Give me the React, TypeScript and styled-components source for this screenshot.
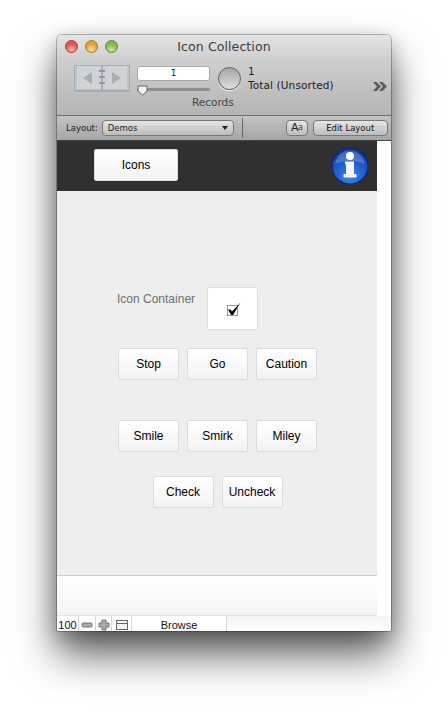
import React from "react";
import styled, { createGlobalStyle } from "styled-components";

const Global = createGlobalStyle`
html, body {
  margin: 0;
  background: #fff;
  height: 710px;
  overflow: hidden;
}
body {
  font-family: "Liberation Sans", Arial, sans-serif;
}
`;

const Page = styled.div`
  padding: 35px 0 0 57px;
`;

const Window = styled.div`
  width: 334px;
  height: 596px;
  box-sizing: border-box;
  border-radius: 5px 5px 2px 2px;
  overflow: hidden;
  display: flex;
  flex-direction: column;
  background: #fff;
  box-shadow: 0 0 0 1px rgba(0, 0, 0, 0.25), 0 24px 42px rgba(0, 0, 0, 0.62), 0 6px 20px rgba(0, 0, 0, 0.25);
`;

const TitleBar = styled.div`
  height: 81px;
  flex: none;
  position: relative;
  background: linear-gradient(#e4e4e4, #cfcfcf 30%, #b4b4b4);
  border-bottom: 1px solid #6e6e6e;
  box-sizing: border-box;
  font-family: "DejaVu Sans", sans-serif;
`;

const Lights = styled.div`
  position: absolute;
  left: 8px;
  top: 5px;
  display: flex;
  gap: 7px;
`;

const Light = styled.span<{ $c: string; $d: string }>`
  width: 11px;
  height: 11px;
  border-radius: 50%;
  border: 1px solid ${(p) => p.$d};
  background: radial-gradient(circle at 50% 80%, #fff9 0, transparent 60%), ${(p) => p.$c};
`;

const Title = styled.div`
  text-align: center;
  padding-top: 4px;
  font-size: 12.5px;
  line-height: 16px;
  color: #3c3c3c;
  letter-spacing: 0.1px;
`;

const Controls = styled.div`
  display: flex;
  padding: 9px 0 0 17px;
`;

const Book = styled.svg`
  width: 56px;
  height: 27px;
  flex: none;
  margin-top: 1px;
`;

const Pager = styled.div`
  margin: 2px 0 0 7px;
  width: 73px;
  display: flex;
  flex-direction: column;
`;

const PageInput = styled.div`
  height: 13px;
  background: #fff;
  border: 1px solid #a8a8a8;
  border-radius: 3px;
  font-size: 9px;
  line-height: 13px;
  text-align: center;
  color: #222;
`;

const Slider = styled.div`
  margin-top: 7px;
  height: 3px;
  background: #8f8f8f;
  border-radius: 2px;
  position: relative;
`;

const Thumb = styled.svg`
  position: absolute;
  left: 0;
  top: -3px;
  width: 11px;
  height: 11px;
`;

const RecordsLabel = styled.div`
  margin-top: 5px;
  padding-left: 55px;
  white-space: nowrap;
  font-size: 10.5px;
  line-height: 13px;
  color: #444;
`;

const Pie = styled.div`
  width: 21px;
  height: 21px;
  margin: 3px 0 0 8px;
  flex: none;
  border-radius: 50%;
  border: 1px solid #5c5c5c;
  background: linear-gradient(#a8a8a8, #c4c4c4 55%, #e0e0e0);
  box-shadow: 0 1px 1px #eee;
`;

const Counts = styled.div`
  margin-left: 7px;
  font-size: 10.5px;
  line-height: 14px;
  letter-spacing: 0.12px;
  color: #1c1c1c;
  white-space: nowrap;
`;

const More = styled.svg`
  position: absolute;
  right: 3px;
  top: 46px;
  width: 15px;
  height: 11px;
`;

const LayoutBar = styled.div`
  height: 25px;
  flex: none;
  display: flex;
  align-items: center;
  box-sizing: border-box;
  background: linear-gradient(#c3c3c3, #a6a6a6);
  border-bottom: 1px solid #444;
  font-family: "DejaVu Sans", sans-serif;
  font-size: 8.5px;
  color: #222;
  padding: 0 3px 0 9px;
`;

const ChromeButton = styled.div<{ $w: number }>`
  width: ${(p) => p.$w}px;
  height: 16px;
  box-sizing: border-box;
  flex: none;
  border: 1px solid #777;
  border-radius: 4px;
  background: linear-gradient(#e6e6e6, #bcbcbc);
  line-height: 15px;
  text-align: center;
`;

const LayoutSelect = styled(ChromeButton)`
  margin-left: 4px;
  text-align: left;
  padding-left: 5px;
  position: relative;
`;

const Caret = styled.span`
  position: absolute;
  right: 5px;
  top: 5px;
  border-left: 3px solid transparent;
  border-right: 3px solid transparent;
  border-top: 4px solid #222;
`;

const Divider = styled.div`
  width: 1px;
  height: 20px;
  background: #666;
  margin: 0 43px 0 8px;
  flex: none;
`;

const FontButton = styled(ChromeButton)`
  font-size: 11px;
  line-height: 14px;
  letter-spacing: -0.5px;
`;

const SmallA = styled.span`
  font-size: 8px;
  color: #444;
  vertical-align: 1px;
`;

const EditLayout = styled(ChromeButton)`
  margin-left: 5px;
  color: #111;
`;

const Content = styled.div`
  flex: 1;
  display: flex;
  min-height: 0;
`;

const Stage = styled.div`
  width: 320px;
  display: flex;
  flex-direction: column;
`;

const Header = styled.div`
  height: 50px;
  flex: none;
  box-sizing: border-box;
  background: #303030;
  display: flex;
  align-items: center;
  justify-content: space-between;
  padding: 0 8px 2px 37px;
`;

const Info = styled.svg`
  width: 38px;
  height: 38px;
  flex: none;
  margin-top: 2px;
`;

const Button = styled.div<{ $w?: number }>`
  width: ${(p) => p.$w ?? 61}px;
  height: 32px;
  box-sizing: border-box;
  border: 1px solid #dcdcdc;
  border-radius: 2px;
  background: linear-gradient(#fff, #f3f3f3);
  color: #000;
  font-size: 12px;
  line-height: 30px;
  text-align: center;
`;

const FormArea = styled.div`
  flex: 1;
  background: #eeeeee;
  padding-top: 96px;
`;

const ContainerRow = styled.div`
  display: flex;
  padding-left: 60px;
  height: 43px;
`;

const ContainerLabel = styled.div`
  width: 90px;
  font-size: 12px;
  line-height: 14px;
  padding-top: 5px;
  color: #6d6f70;
`;

const IconContainer = styled.div`
  width: 51px;
  height: 43px;
  box-sizing: border-box;
  background: #fff;
  border: 1px solid #dedede;
  border-radius: 2px;
  display: flex;
  align-items: center;
  justify-content: center;
`;

const Checkbox = styled.svg`
  width: 18px;
  height: 18px;
`;

const ButtonRow = styled.div<{ $top: number }>`
  display: flex;
  justify-content: center;
  gap: 8px;
  padding-left: 1px;
  margin-top: ${(p) => p.$top}px;
`;

const Footer = styled.div`
  height: 41px;
  flex: none;
  box-sizing: border-box;
  background: linear-gradient(#fff, #f4f4f4);
  border-top: 1px solid #cfcfcf;
  border-bottom: 1px solid #e2e2e2;
`;

const RightStrip = styled.div`
  width: 14px;
  flex: none;
  background: #fff;
  box-sizing: border-box;
`;

const StatusBar = styled.div`
  height: 15px;
  flex: none;
  display: flex;
  background: linear-gradient(#f4f4f4, #fff);
  font-size: 11px;
  color: #111;
`;

const StatusCell = styled.div<{ $w: number }>`
  width: ${(p) => p.$w}px;
  flex: none;
  box-sizing: border-box;
  border-right: 1px solid #d6d6d6;
  background: #fff;
  padding-top: 2px;
  display: flex;
  align-items: center;
  justify-content: center;
`;

const StatusIcon = styled.svg`
  width: 14px;
  height: 12px;
`;

export default function App() {
  return (
    <>
      <Global />
      <Page>
        <Window>
          <TitleBar>
            <Lights>
              <Light $c="#e2524c" $d="#a8403c" />
              <Light $c="#e0a030" $d="#a67a2c" />
              <Light $c="#7cb84c" $d="#5f8f3c" />
            </Lights>
            <Title>Icon Collection</Title>
            <Controls>
              <Book viewBox="0 0 56 27">
                <rect x="0.5" y="0.5" width="55" height="25" fill="#bcc5cc" stroke="#a3adb6" />
                <rect x="3" y="1" width="50" height="23" fill="#ced3d7" />
                <path d="M0 26h56" stroke="#98a1a9" />
                <path d="M9 13l9-6v12zM47 13l-9-6v12z" fill="#a5afb8" />
                <path d="M28 1v24" stroke="#98a3ac" strokeWidth="1.5" />
                <path d="M25 6h6M25 12h6M25 18h6" stroke="#8d98a2" strokeWidth="2" />
              </Book>
              <Pager>
                <PageInput>1</PageInput>
                <Slider>
                  <Thumb viewBox="0 0 11 11">
                    <path d="M1 1h9v5l-4.5 4L1 6z" fill="#f4f4f4" stroke="#666" />
                  </Thumb>
                </Slider>
                <RecordsLabel>Records</RecordsLabel>
              </Pager>
              <Pie />
              <Counts>
                1
                <br />
                Total (Unsorted)
              </Counts>
            </Controls>
            <More viewBox="0 0 15 11">
              <path d="M0 1h3.5L8 5.5 3.5 10H0l4-4.5zM6 1h3.5L14 5.5 9.5 10H6l4-4.5z" fill="#5a5a5a" />
            </More>
          </TitleBar>
          <LayoutBar>
            Layout:
            <LayoutSelect $w={132}>
              Demos
              <Caret />
            </LayoutSelect>
            <Divider />
            <FontButton $w={22}>
              A<SmallA>a</SmallA>
            </FontButton>
            <EditLayout $w={75}>Edit Layout</EditLayout>
          </LayoutBar>
          <Content>
            <Stage>
              <Header>
                <Button $w={84}>Icons</Button>
                <Info viewBox="0 0 38 38">
                  <defs>
                    <radialGradient id="infoFill" cx="50%" cy="80%" r="75%">
                      <stop offset="0" stopColor="#3f86e8" />
                      <stop offset="0.65" stopColor="#1a57c8" />
                      <stop offset="1" stopColor="#0c3596" />
                    </radialGradient>
                  </defs>
                  <circle cx="19" cy="19" r="18" fill="url(#infoFill)" stroke="#0a2a78" strokeWidth="1.2" />
                  <path d="M4 17C6 8 12 3.5 19 3.5S32 8 34 17c-8-4-22-4-30 0z" fill="#fff" opacity="0.22" />
                  <circle cx="19" cy="9" r="4" fill="#fff" />
                  <path d="M14 14.5h9V27h2.5v3.5h-13V27H15V17.5h-1z" fill="#f4f6fa" />
                </Info>
              </Header>
              <FormArea>
                <ContainerRow>
                  <ContainerLabel>Icon Container</ContainerLabel>
                  <IconContainer>
                    <Checkbox viewBox="0 0 18 18">
                      <rect x="3.5" y="5.5" width="10" height="10" fill="#fff" stroke="#6f9fe8" />
                      <path d="M4 9.5h2.5L8 11.5l8.5-9L9 15H7z" fill="#000" />
                    </Checkbox>
                  </IconContainer>
                </ContainerRow>
                <ButtonRow $top={18}>
                  <Button>Stop</Button>
                  <Button>Go</Button>
                  <Button>Caution</Button>
                </ButtonRow>
                <ButtonRow $top={40}>
                  <Button>Smile</Button>
                  <Button>Smirk</Button>
                  <Button>Miley</Button>
                </ButtonRow>
                <ButtonRow $top={24}>
                  <Button>Check</Button>
                  <Button>Uncheck</Button>
                </ButtonRow>
              </FormArea>
              <Footer />
            </Stage>
            <RightStrip />
          </Content>
          <StatusBar>
            <StatusCell $w={22}>100</StatusCell>
            <StatusCell $w={17}>
              <StatusIcon viewBox="0 0 14 12">
                <rect x="2" y="4" width="10" height="4" rx="1" fill="#aaa" stroke="#777" />
              </StatusIcon>
            </StatusCell>
            <StatusCell $w={16}>
              <StatusIcon viewBox="0 0 14 12">
                <path d="M5 1h4v3h3v4H9v3H5V8H2V4h3z" fill="#aaa" stroke="#777" />
              </StatusIcon>
            </StatusCell>
            <StatusCell $w={20}>
              <StatusIcon viewBox="0 0 14 12">
                <rect x="1.5" y="1.5" width="11" height="9" fill="#f2f2f2" stroke="#666" />
                <path d="M1.5 4.5h11" stroke="#666" />
              </StatusIcon>
            </StatusCell>
            <StatusCell $w={95}>Browse</StatusCell>
          </StatusBar>
        </Window>
      </Page>
    </>
  );
}
